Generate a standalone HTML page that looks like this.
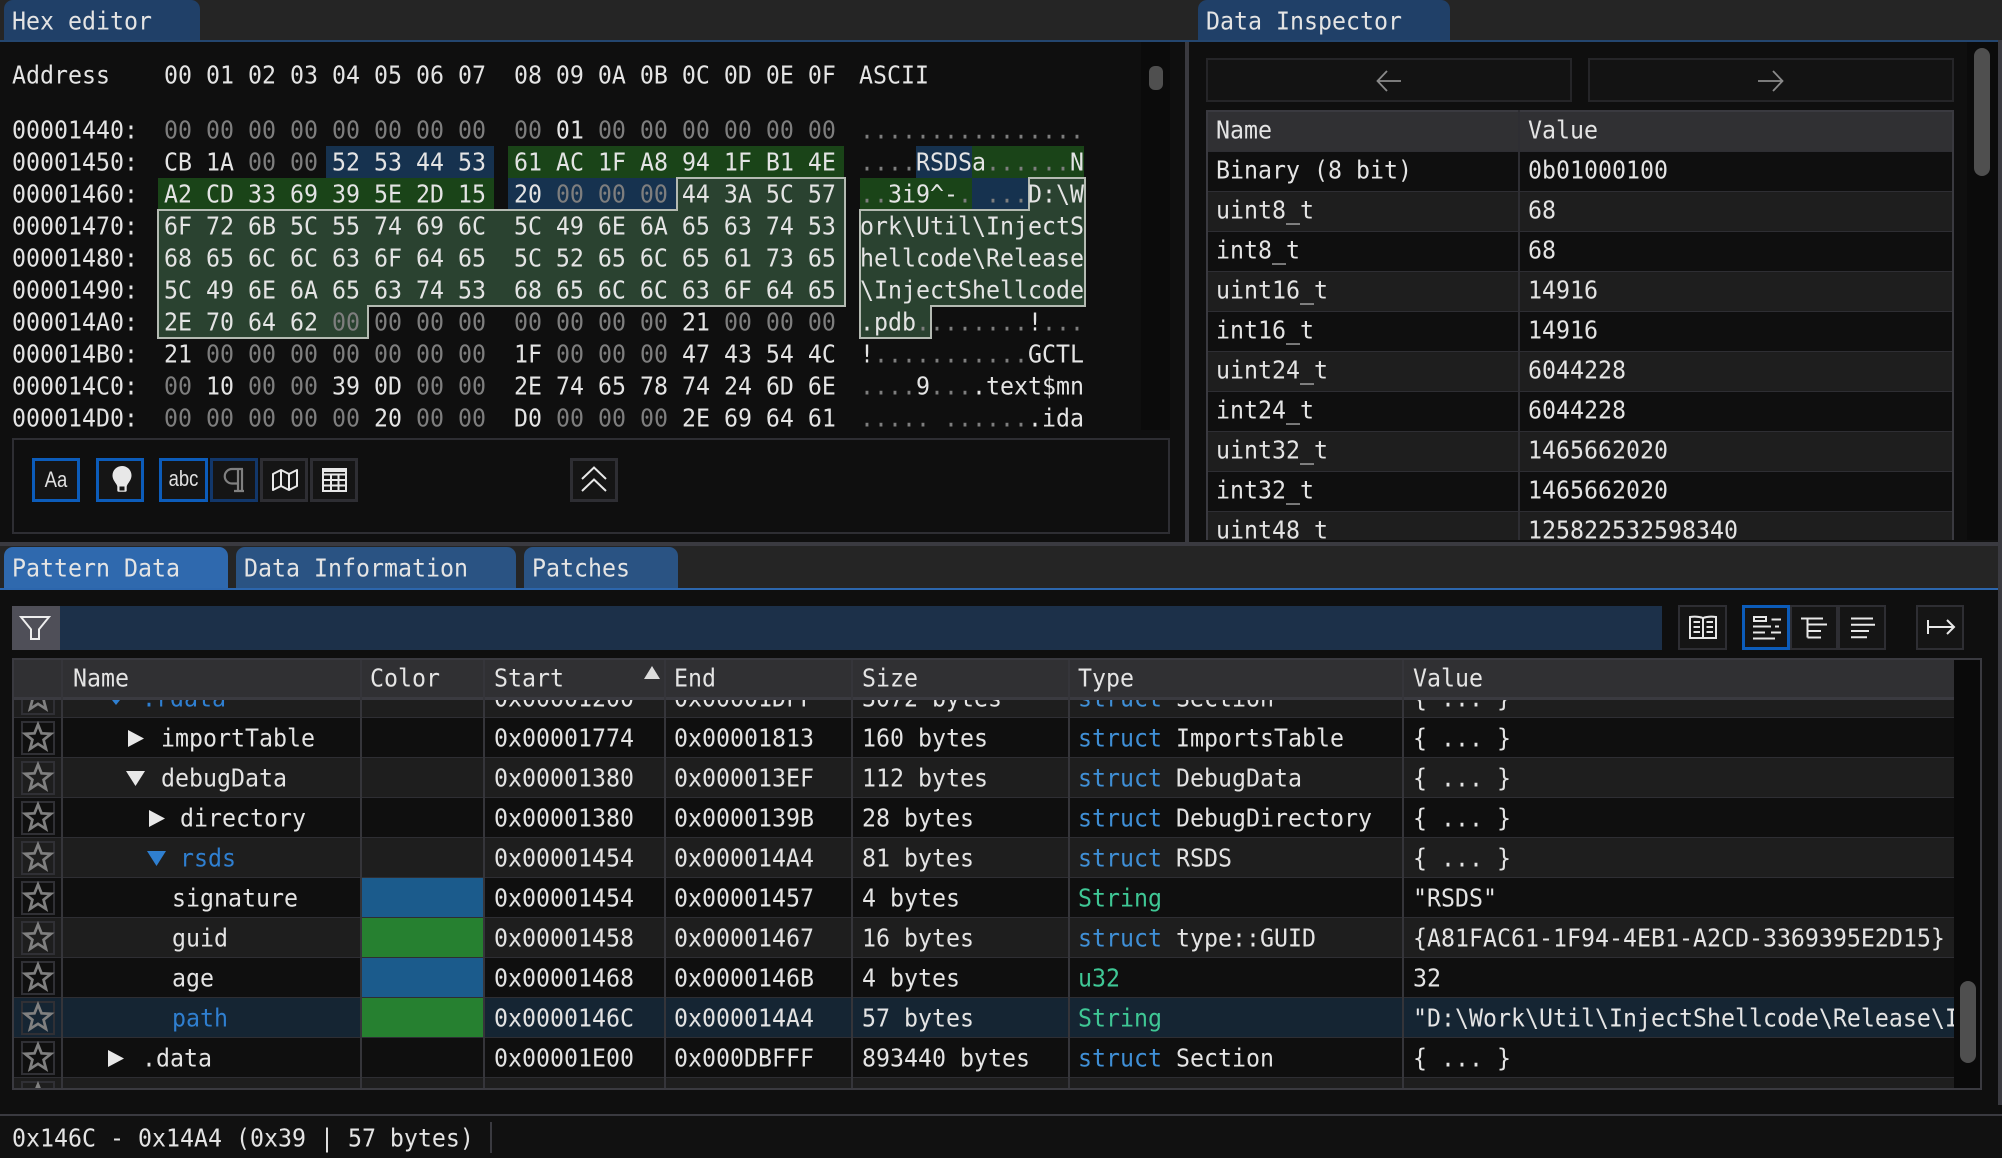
<!DOCTYPE html>
<html><head><meta charset="utf-8"><title>Hex editor</title>
<style>
html,body{margin:0;padding:0;background:#0f0f0f;width:2002px;height:1158px;overflow:hidden}
body{position:relative;font-family:"DejaVu Sans Mono","Liberation Mono",monospace;font-size:23.25px;color:#e4e4e4}
div,span,svg{position:absolute}
.t{white-space:pre;line-height:32px;height:32px;margin:1px 0 0 -1px;transform:scaleY(1.06)}
b{font-weight:normal;color:#7e7e7e}
.r{left:0;width:1954px;height:40px;line-height:40px;white-space:pre;border-bottom:0}
.r span{top:1px;transform:scaleY(1.06)}
.r:after{content:"";position:absolute;left:0;right:0;bottom:-1px;height:2px;background:#2e2e33}
.k{color:#3f8fd6}.g{color:#3fc795}.bl{color:#2f7fd0}
.btn{box-sizing:border-box;border:2px solid #2e2e33;background:#151515}
.on{border:3px solid #0c5cba}
.ir{left:1206px;width:748px;height:40px;line-height:38px;white-space:pre}
.ir:after{content:"";position:absolute;left:0;right:0;bottom:-1px;height:2px;background:#2e2e33}
.ir span{top:0;transform:scaleY(1.06)}
.ab{font-family:"Liberation Sans",sans-serif;text-align:center;color:#e0e0e0}
.ab span{left:0;right:0;top:0;transform:scaleX(.84)}
</style></head><body>

<!-- top title bars -->
<div style="left:0;top:0;width:2002px;height:40px;background:#252525"></div>
<div style="left:4px;top:0;width:196px;height:40px;background:#204068;border-radius:9px 9px 0 0"></div>
<div style="left:1198px;top:0;width:252px;height:40px;background:#204068;border-radius:9px 9px 0 0"></div>
<div style="left:0;top:40px;width:1998px;height:2px;background:#24466f"></div>
<div class="t" style="left:13px;top:5px">Hex editor</div>
<div class="t" style="left:1207px;top:5px">Data Inspector</div>

<!-- hex highlights -->
<div style="left:1141px;top:42px;width:29px;height:388px;background:#0b0b0b"></div>
<div style="left:1149px;top:66px;width:14px;height:24px;background:#4f4f4f;border-radius:6px"></div>
<div style="left:326px;top:146px;width:168px;height:32px;background:#16324f"></div>
<div style="left:508px;top:146px;width:336px;height:32px;background:#1a4418"></div>
<div style="left:158px;top:178px;width:336px;height:32px;background:#1a4418"></div>
<div style="left:508px;top:178px;width:169px;height:32px;background:#16324f"></div>
<div style="left:916px;top:146px;width:56px;height:32px;background:#16324f"></div>
<div style="left:972px;top:146px;width:112px;height:32px;background:#1a4418"></div>
<div style="left:860px;top:178px;width:112px;height:32px;background:#1a4418"></div>
<div style="left:972px;top:178px;width:57px;height:32px;background:#16324f"></div>
<svg style="left:0;top:0" width="1180" height="430">
<polygon points="677,178 845,178 845,306 368,306 368,338 158,338 158,210 677,210" fill="#2a4230" stroke="#b4bab2" stroke-width="2"/>
<polygon points="1029,178 1085,178 1085,306 931,306 931,338 860,338 860,210 1029,210" fill="#2a4230" stroke="#b4bab2" stroke-width="2"/>
</svg>

<!-- hex text -->
<div class="t" style="left:13px;top:59px">Address</div>
<div class="t" style="left:165px;top:59px">00 01 02 03 04 05 06 07  08 09 0A 0B 0C 0D 0E 0F</div>
<div class="t" style="left:860px;top:59px">ASCII</div>

<div class="t" style="left:13px;top:114px">00001440:</div>
<div class="t" style="left:13px;top:146px">00001450:</div>
<div class="t" style="left:13px;top:178px">00001460:</div>
<div class="t" style="left:13px;top:210px">00001470:</div>
<div class="t" style="left:13px;top:242px">00001480:</div>
<div class="t" style="left:13px;top:274px">00001490:</div>
<div class="t" style="left:13px;top:306px">000014A0:</div>
<div class="t" style="left:13px;top:338px">000014B0:</div>
<div class="t" style="left:13px;top:370px">000014C0:</div>
<div class="t" style="left:13px;top:402px">000014D0:</div>

<div class="t" style="left:165px;top:114px"><b>00 00 00 00 00 00 00 00  00</b> 01 <b>00 00 00 00 00 00</b></div>
<div class="t" style="left:165px;top:146px">CB 1A <b>00 00</b> 52 53 44 53  61 AC 1F A8 94 1F B1 4E</div>
<div class="t" style="left:165px;top:178px">A2 CD 33 69 39 5E 2D 15  20 <b>00 00 00</b> 44 3A 5C 57</div>
<div class="t" style="left:165px;top:210px">6F 72 6B 5C 55 74 69 6C  5C 49 6E 6A 65 63 74 53</div>
<div class="t" style="left:165px;top:242px">68 65 6C 6C 63 6F 64 65  5C 52 65 6C 65 61 73 65</div>
<div class="t" style="left:165px;top:274px">5C 49 6E 6A 65 63 74 53  68 65 6C 6C 63 6F 64 65</div>
<div class="t" style="left:165px;top:306px">2E 70 64 62 <b>00 00 00 00  00 00 00 00</b> 21 <b>00 00 00</b></div>
<div class="t" style="left:165px;top:338px">21 <b>00 00 00 00 00 00 00</b>  1F <b>00 00 00</b> 47 43 54 4C</div>
<div class="t" style="left:165px;top:370px"><b>00</b> 10 <b>00 00</b> 39 0D <b>00 00</b>  2E 74 65 78 74 24 6D 6E</div>
<div class="t" style="left:165px;top:402px"><b>00 00 00 00 00</b> 20 <b>00 00</b>  D0 <b>00 00 00</b> 2E 69 64 61</div>

<div class="t" style="left:861px;top:114px"><b>................</b></div>
<div class="t" style="left:861px;top:146px"><b>....</b>RSDSa<b>......</b>N</div>
<div class="t" style="left:861px;top:178px"><b>..</b>3i9^-<b>.</b> <b>...</b>D:\W</div>
<div class="t" style="left:861px;top:210px">ork\Util\InjectS</div>
<div class="t" style="left:861px;top:242px">hellcode\Release</div>
<div class="t" style="left:861px;top:274px">\InjectShellcode</div>
<div class="t" style="left:861px;top:306px">.pdb<b>........</b>!<b>...</b></div>
<div class="t" style="left:861px;top:338px">!<b>...........</b>GCTL</div>
<div class="t" style="left:861px;top:370px"><b>....</b>9<b>...</b>.text$mn</div>
<div class="t" style="left:861px;top:402px"><b>.....</b> <b>......</b>.ida</div>

<!-- hex toolbar -->
<div style="left:12px;top:438px;width:1158px;height:96px;box-sizing:border-box;border:2px solid #2e2e33"></div>
<div class="btn on ab" style="left:32px;top:458px;width:48px;height:44px;font-size:22px;line-height:38px"><span>Aa</span></div>
<div class="btn on" style="left:96px;top:458px;width:48px;height:44px"></div>
<div class="btn on ab" style="left:159px;top:458px;width:49px;height:44px;font-size:22px;line-height:36px"><span>abc</span></div>
<div class="btn" style="left:210px;top:458px;width:48px;height:44px;border:3px solid #12376a"></div>
<div class="btn" style="left:260px;top:458px;width:48px;height:44px;border-width:3px"></div>
<div class="btn" style="left:310px;top:458px;width:48px;height:44px;border-width:3px"></div>
<div class="btn" style="left:570px;top:458px;width:48px;height:44px;border-width:3px"></div>

<!-- data inspector -->
<div style="left:1967px;top:42px;width:31px;height:498px;background:#0b0b0b"></div>
<div style="left:1974px;top:48px;width:16px;height:128px;background:#4f4f4f;border-radius:8px"></div>
<div class="btn" style="left:1206px;top:58px;width:366px;height:44px;border-color:#252528;background:#131313"></div>
<div class="btn" style="left:1588px;top:58px;width:366px;height:44px;border-color:#252528;background:#131313"></div>

<div style="left:1206px;top:110px;width:748px;height:430px;overflow:hidden">
<div style="left:0;top:0;width:748px;height:42px;background:#303033"></div>
</div>
<div style="left:1206px;top:0;width:748px;height:540px;clip-path:inset(110px 0 0 0);overflow:hidden">
<div style="left:-1206px;top:0;width:2002px;height:540px">
<div class="ir" style="top:112px;background:#303033;height:40px"><span style="left:10px">Name</span><span style="left:322px">Value</span></div>
<div class="ir" style="top:152px;background:#0f0f0f"><span style="left:10px">Binary (8 bit)</span><span style="left:322px">0b01000100</span></div>
<div class="ir" style="top:192px;background:#1e1e1e"><span style="left:10px">uint8_t</span><span style="left:322px">68</span></div>
<div class="ir" style="top:232px;background:#0f0f0f"><span style="left:10px">int8_t</span><span style="left:322px">68</span></div>
<div class="ir" style="top:272px;background:#1e1e1e"><span style="left:10px">uint16_t</span><span style="left:322px">14916</span></div>
<div class="ir" style="top:312px;background:#0f0f0f"><span style="left:10px">int16_t</span><span style="left:322px">14916</span></div>
<div class="ir" style="top:352px;background:#1e1e1e"><span style="left:10px">uint24_t</span><span style="left:322px">6044228</span></div>
<div class="ir" style="top:392px;background:#0f0f0f"><span style="left:10px">int24_t</span><span style="left:322px">6044228</span></div>
<div class="ir" style="top:432px;background:#1e1e1e"><span style="left:10px">uint32_t</span><span style="left:322px">1465662020</span></div>
<div class="ir" style="top:472px;background:#0f0f0f"><span style="left:10px">int32_t</span><span style="left:322px">1465662020</span></div>
<div class="ir" style="top:512px;background:#1e1e1e"><span style="left:10px">uint48_t</span><span style="left:322px">125822532598340</span></div>
</div></div>
<div style="left:1206px;top:110px;width:748px;height:2px;background:#3a3a40"></div>
<div style="left:1206px;top:110px;width:2px;height:430px;background:#3a3a40"></div>
<div style="left:1952px;top:110px;width:2px;height:430px;background:#3a3a40"></div>
<div style="left:1518px;top:110px;width:2px;height:430px;background:#2e2e33"></div>

<!-- splitters -->
<div style="left:1185px;top:42px;width:4px;height:500px;background:#3a3a40"></div>
<div style="left:0;top:542px;width:2002px;height:4px;background:#3a3a40"></div>
<div style="left:1998px;top:40px;width:4px;height:1065px;background:#3a3a40"></div>

<!-- bottom tabs -->
<div style="left:0;top:546px;width:1998px;height:42px;background:#252525"></div>
<div style="left:4px;top:547px;width:224px;height:41px;background:#2f69ae;border-radius:9px 9px 0 0"></div>
<div style="left:236px;top:547px;width:280px;height:41px;background:#2a5383;border-radius:9px 9px 0 0"></div>
<div style="left:524px;top:547px;width:154px;height:41px;background:#2a5383;border-radius:9px 9px 0 0"></div>
<div style="left:0;top:588px;width:1998px;height:2px;background:#2c66ad"></div>
<div class="t" style="left:13px;top:552px">Pattern Data</div>
<div class="t" style="left:245px;top:552px">Data Information</div>
<div class="t" style="left:533px;top:552px">Patches</div>

<!-- filter row -->
<div style="left:12px;top:606px;width:48px;height:44px;background:#4f4f58"></div>
<div style="left:60px;top:606px;width:1602px;height:44px;background:#1c3049"></div>
<div class="btn" style="left:1678px;top:605px;width:49px;height:45px"></div>
<div class="btn" style="left:1790px;top:605px;width:48px;height:45px"></div>
<div class="btn" style="left:1838px;top:605px;width:48px;height:45px"></div>
<div class="btn on" style="left:1742px;top:605px;width:48px;height:45px"></div>
<div class="btn" style="left:1916px;top:605px;width:48px;height:45px"></div>

<!-- pattern table -->
<div style="left:1954px;top:660px;width:26px;height:428px;background:#0a0a0a"></div>
<div style="left:1960px;top:981px;width:16px;height:82px;background:#4f4f4f;border-radius:8px"></div>
<div style="left:0;top:0;width:1954px;height:1088px;clip-path:inset(698px 0 0 14px);overflow:hidden">
<div class="r" style="top:678px;background:#1e1e1e"><span class="bl" style="left:142px">.rdata</span><span style="left:494px">0x00001200</span><span style="left:674px">0x00001DFF</span><span style="left:862px">3072 bytes</span><span style="left:1078px"><i class="k" style="font-style:normal">struct</i> Section</span><span style="left:1413px">{ ... }</span></div>
<div class="r" style="top:718px;background:#0f0f0f"><span style="left:161px">importTable</span><span style="left:494px">0x00001774</span><span style="left:674px">0x00001813</span><span style="left:862px">160 bytes</span><span style="left:1078px"><i class="k" style="font-style:normal">struct</i> ImportsTable</span><span style="left:1413px">{ ... }</span></div>
<div class="r" style="top:758px;background:#1e1e1e"><span style="left:161px">debugData</span><span style="left:494px">0x00001380</span><span style="left:674px">0x000013EF</span><span style="left:862px">112 bytes</span><span style="left:1078px"><i class="k" style="font-style:normal">struct</i> DebugData</span><span style="left:1413px">{ ... }</span></div>
<div class="r" style="top:798px;background:#0f0f0f"><span style="left:180px">directory</span><span style="left:494px">0x00001380</span><span style="left:674px">0x0000139B</span><span style="left:862px">28 bytes</span><span style="left:1078px"><i class="k" style="font-style:normal">struct</i> DebugDirectory</span><span style="left:1413px">{ ... }</span></div>
<div class="r" style="top:838px;background:#1e1e1e"><span class="bl" style="left:180px">rsds</span><span style="left:494px">0x00001454</span><span style="left:674px">0x000014A4</span><span style="left:862px">81 bytes</span><span style="left:1078px"><i class="k" style="font-style:normal">struct</i> RSDS</span><span style="left:1413px">{ ... }</span></div>
<div class="r" style="top:878px;background:#0f0f0f"><div style="left:362px;top:0;width:122px;height:39px;background:#1b5b8c"></div><span style="left:172px">signature</span><span style="left:494px">0x00001454</span><span style="left:674px">0x00001457</span><span style="left:862px">4 bytes</span><span class="g" style="left:1078px">String</span><span style="left:1413px">"RSDS"</span></div>
<div class="r" style="top:918px;background:#1e1e1e"><div style="left:362px;top:0;width:122px;height:39px;background:#268030"></div><span style="left:172px">guid</span><span style="left:494px">0x00001458</span><span style="left:674px">0x00001467</span><span style="left:862px">16 bytes</span><span style="left:1078px"><i class="k" style="font-style:normal">struct</i> type::GUID</span><span style="left:1413px">{A81FAC61-1F94-4EB1-A2CD-3369395E2D15}</span></div>
<div class="r" style="top:958px;background:#0f0f0f"><div style="left:362px;top:0;width:122px;height:39px;background:#1b5b8c"></div><span style="left:172px">age</span><span style="left:494px">0x00001468</span><span style="left:674px">0x0000146B</span><span style="left:862px">4 bytes</span><span class="g" style="left:1078px">u32</span><span style="left:1413px">32</span></div>
<div class="r" style="top:998px;background:#152533"><div style="left:362px;top:0;width:122px;height:39px;background:#268030"></div><span class="bl" style="left:172px">path</span><span style="left:494px">0x0000146C</span><span style="left:674px">0x000014A4</span><span style="left:862px">57 bytes</span><span class="g" style="left:1078px">String</span><span style="left:1413px">"D:\Work\Util\InjectShellcode\Release\I</span></div>
<div class="r" style="top:1038px;background:#0f0f0f"><span style="left:142px">.data</span><span style="left:494px">0x00001E00</span><span style="left:674px">0x000DBFFF</span><span style="left:862px">893440 bytes</span><span style="left:1078px"><i class="k" style="font-style:normal">struct</i> Section</span><span style="left:1413px">{ ... }</span></div>
<div class="r" style="top:1078px;background:#1e1e1e"></div>
</div>
<div style="left:14px;top:660px;width:1940px;height:38px;background:#303033"></div>
<div style="left:14px;top:697px;width:1940px;height:3px;background:#3a3a40"></div>
<div class="t" style="left:74px;top:662px">Name</div>
<div class="t" style="left:371px;top:662px">Color</div>
<div class="t" style="left:495px;top:662px">Start</div>
<div class="t" style="left:675px;top:662px">End</div>
<div class="t" style="left:863px;top:662px">Size</div>
<div class="t" style="left:1079px;top:662px">Type</div>
<div class="t" style="left:1414px;top:662px">Value</div>

<!-- status bar -->
<div style="left:0;top:1114px;width:2002px;height:2px;background:#3a3a40"></div>
<div style="left:0;top:1116px;width:2002px;height:42px;background:#111"></div>
<div class="t" style="left:13px;top:1122px">0x146C - 0x14A4 (0x39 | 57 bytes)</div>
<div style="left:490px;top:1122px;width:2px;height:31px;background:#3a3a40"></div>

<!-- vector overlay -->
<svg style="left:0;top:0" width="2002" height="1158" viewBox="0 0 2002 1158" fill="none">
<defs>
<polygon id="st" points="0,-13.500 3.500,-4.700 13,-4.200 5.600,1.800 8,11 0,5.800 -8,11 -5.600,1.800 -13,-4.200 -3.500,-4.700" fill="none" stroke="#808080" stroke-width="2.700"/>
<rect id="sb" x="-16" y="-16" width="32" height="32" fill="none" stroke="#303035" stroke-width="2"/>
</defs>
<!-- outer table border -->
<rect x="13" y="659" width="1968" height="430" stroke="#3a3a40" stroke-width="2"/>
<g stroke="#35353a" stroke-width="2">
<path d="M62 660V1088M361 660V1088M484 660V1088M665 660V1088M852 660V1088M1069 660V1088M1403 660V1088"/>
</g>
<!-- stars (clip to table) -->
<g clip-path="url(#cp)">
<clipPath id="cp"><rect x="14" y="700" width="48" height="388"/></clipPath>
<use href="#sb" x="38" y="698"/><use href="#st" x="38" y="698"/>
<use href="#sb" x="38" y="738"/><use href="#st" x="38" y="738"/>
<use href="#sb" x="38" y="778"/><use href="#st" x="38" y="778"/>
<use href="#sb" x="38" y="818"/><use href="#st" x="38" y="818"/>
<use href="#sb" x="38" y="858"/><use href="#st" x="38" y="858"/>
<use href="#sb" x="38" y="898"/><use href="#st" x="38" y="898"/>
<use href="#sb" x="38" y="938"/><use href="#st" x="38" y="938"/>
<use href="#sb" x="38" y="978"/><use href="#st" x="38" y="978"/>
<use href="#sb" x="38" y="1018"/><use href="#st" x="38" y="1018"/>
<use href="#sb" x="38" y="1058"/><use href="#st" x="38" y="1058"/>
<use href="#sb" x="38" y="1098"/><use href="#st" x="38" y="1098"/>
</g>
<!-- tree triangles -->
<polygon points="112,700 120,700 116,705" fill="#2f7fd0"/>
<polygon points="128,730 144,738.500 128,747" fill="#e8e8e8"/>
<polygon points="126,771 145,771 135.500,786" fill="#e8e8e8"/>
<polygon points="149,810 165,818.500 149,827" fill="#e8e8e8"/>
<polygon points="147,851 166,851 156.500,866" fill="#2f7fd0"/>
<polygon points="108,1050 124,1058.500 108,1067" fill="#e8e8e8"/>
<!-- sort arrow -->
<polygon points="652,666 660,679 644,679" fill="#dcdcdc"/>
<!-- inspector arrows -->
<path d="M1401 81H1378M1387 71L1377.500 81L1387 91" stroke="#8a8a8a" stroke-width="1.800"/>
<path d="M1758 81H1782M1773 71L1782.500 81L1773 91" stroke="#8a8a8a" stroke-width="1.800"/>
<!-- bulb -->
<path d="M122 466c5.300 0 9.500 4.200 9.500 9.500 0 3.800-2.500 6.500-4 9-.8 1.300-.8 2-.8 3v3c0 .7-.5 1.200-1.200 1.200h-7c-.7 0-1.200-.5-1.200-1.200v-3c0-1 0-1.700-.8-3-1.500-2.500-4-5.200-4-9 0-5.300 4.200-9.500 9.500-9.500z" fill="#e8e8e8"/>
<rect x="119.500" y="486.500" width="5" height="4" fill="#151515"/>
<!-- pilcrow -->
<path d="M243 469H232a7 7 0 0 0 0 14.500H238M238 469V491M242 469V491M234 491H244" stroke="#808080" stroke-width="2.200"/>
<!-- map -->
<path d="M273 474L281 470L289 474L297 470V486L289 490L281 486L273 490ZM281 470V486M289 474V490" stroke="#e8e8e8" stroke-width="2" stroke-linejoin="round"/>
<!-- table -->
<path d="M323 469H346V491H323ZM323 474.500H346M323 480H346M323 485.500H346M331 474.500V491M338.500 474.500V491" stroke="#e8e8e8" stroke-width="2"/>
<rect x="322" y="468" width="25" height="4" fill="#e8e8e8"/>
<!-- double chevron -->
<path d="M582 479L594 467.500L606 479M582 491L594 479.500L606 491" stroke="#e8e8e8" stroke-width="2"/>
<!-- filter -->
<path d="M21 617H49L39 629.300V639H31V629.300Z" stroke="#eee" stroke-width="2"/>
<!-- book -->
<path d="M1703 618C1699 616.500 1694 616.500 1690 617V638H1716V617C1712 616.500 1707 616.500 1703 618ZM1703 618V638.500M1693.500 622H1700M1693.500 627H1700M1693.500 632H1700M1706.500 622H1713M1706.500 627H1713M1706.500 632H1713" stroke="#e8e8e8" stroke-width="2"/>
<!-- tree list 1 -->
<path d="M1754 617H1766V621H1754ZM1771.500 619.500H1781M1753 626.500H1771M1775 626.500H1779M1753 632.500H1765M1771 632.500H1781M1753 638.500H1775" stroke="#e8e8e8" stroke-width="2"/>
<!-- tree list 2 -->
<path d="M1801 618.500H1823M1807.500 618.500V637.500M1807.500 624.500H1827M1807.500 631H1821M1807.500 637.500H1821" stroke="#e8e8e8" stroke-width="2"/>
<!-- lines -->
<path d="M1851 618.500H1873M1851 624.700H1875M1851 631H1869M1851 637.300H1867" stroke="#e8e8e8" stroke-width="2"/>
<!-- arrow -->
<path d="M1928 620V634M1928 627H1953M1947 620L1954 627L1947 634" stroke="#e8e8e8" stroke-width="2"/>
</svg>
</body></html>
